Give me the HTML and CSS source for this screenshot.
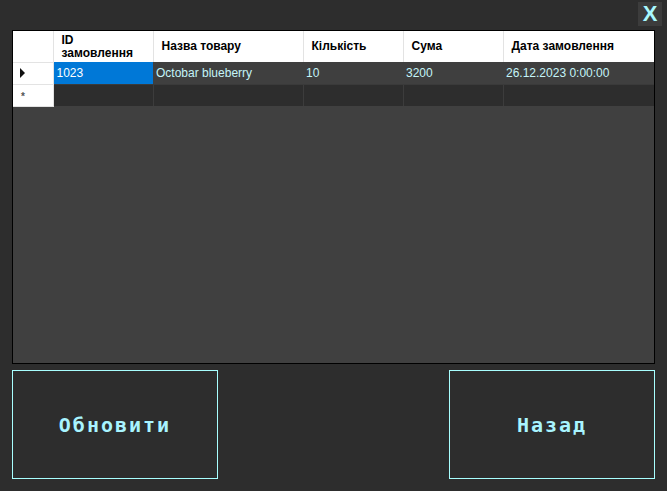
FILE: index.html
```html
<!DOCTYPE html>
<html lang="uk">
<head>
<meta charset="utf-8">
<link rel="stylesheet" href="styles.css">
</head>
<body>
<div class="window">
  <div class="topbar">
    <button class="close">X</button>
  </div>
  <div class="grid">
    <table class="table">
      <colgroup>
        <col class="c-rh"><col class="c-100"><col class="c-150"><col class="c-100"><col class="c-100"><col class="c-last">
      </colgroup>
      <thead>
        <tr>
          <th class="rh"></th>
          <th>ID<br>замовлення</th>
          <th>Назва товару</th>
          <th>Кількість</th>
          <th>Сума</th>
          <th>Дата замовлення</th>
        </tr>
      </thead>
      <tbody>
        <tr class="row1">
          <td class="rh"><span class="tri"></span></td>
          <td class="sel">1023</td>
          <td>Octobar blueberry</td>
          <td>10</td>
          <td>3200</td>
          <td>26.12.2023 0:00:00</td>
        </tr>
        <tr class="row2">
          <td class="rh"><span class="star">*</span></td>
          <td></td><td></td><td></td><td></td><td></td>
        </tr>
      </tbody>
    </table>
  </div>
  <div class="actions">
    <button class="btn">Обновити</button>
    <button class="btn">Назад</button>
  </div>
</div>
</body>
</html>
```

FILE: styles.css
```css
html, body {
  margin: 0;
  padding: 0;
  background: #2d2d2d;
}
.window {
  width: 667px;
  height: 491px;
  display: flex;
  flex-direction: column;
}
.topbar {
  height: 30px;
  display: flex;
  justify-content: flex-end;
  align-items: flex-start;
}
.close {
  margin: 2px 5px 0 0;
  width: 24px;
  height: 24px;
  padding: 0;
  border: none;
  background: #3c3c3c;
  color: #a8f8ff;
  font-family: "Liberation Sans", Arial, sans-serif;
  font-weight: bold;
  font-size: 22px;
  line-height: 24px;
}
.grid {
  margin-left: 12px;
  width: 641px;
  height: 332px;
  border: 1px solid #000;
  background: #404040;
  overflow: hidden;
}
.table {
  border-collapse: collapse;
  table-layout: fixed;
  width: 641px;
  font-family: "Liberation Sans", Arial, sans-serif;
  font-size: 12px;
}
.c-rh { width: 40px; }
.c-100 { width: 100px; }
.c-150 { width: 150px; }
.c-last { width: 151px; }
th {
  background: #fff;
  color: #000;
  font-weight: bold;
  text-align: left;
  height: 31px;
  padding: 0 0 0 8px;
  line-height: 13px;
  border-right: 1px solid #e3e3e3;
  box-sizing: border-box;
  vertical-align: middle;
}
th:last-child { border-right: none; }
td {
  height: 22px;
  padding: 0 0 0 3px;
  box-sizing: border-box;
  color: #c4f4f8;
  white-space: nowrap;
  overflow: hidden;
}
.row1 td { background: #3f3f3f; border-bottom: 1px solid #3a3a3a; }
.row2 td { background: #2d2d2d; border-right: 1px solid #3c3c3c; }
.row2 td:last-child { border-right: none; }
td.sel { background: #0078d7 !important; color: #fff; }
td.rh, th.rh {
  background: #fff !important;
  padding: 0;
  border-right: 1px solid #e3e3e3;
  border-bottom: 1px solid #e3e3e3;
}
.tri {
  display: block;
  width: 0;
  height: 0;
  margin-left: 7px;
  border-left: 5px solid #111;
  border-top: 5px solid transparent;
  border-bottom: 5px solid transparent;
}
.star {
  display: block;
  margin-left: 8px;
  color: #555;
  font-size: 10px;
  font-weight: bold;
  line-height: 10px;
  margin-top: 4px;
}
.actions {
  margin-top: 6px;
  padding: 0 12px;
  display: flex;
  justify-content: space-between;
}
.btn {
  width: 206px;
  height: 109px;
  background: #2d2d2d;
  border: 1px solid #a8ffff;
  color: #a8f4ff;
  font-family: "DejaVu Sans Mono", monospace;
  font-weight: bold;
  font-size: 20px;
  letter-spacing: 2px;
  padding: 0;
}
```
